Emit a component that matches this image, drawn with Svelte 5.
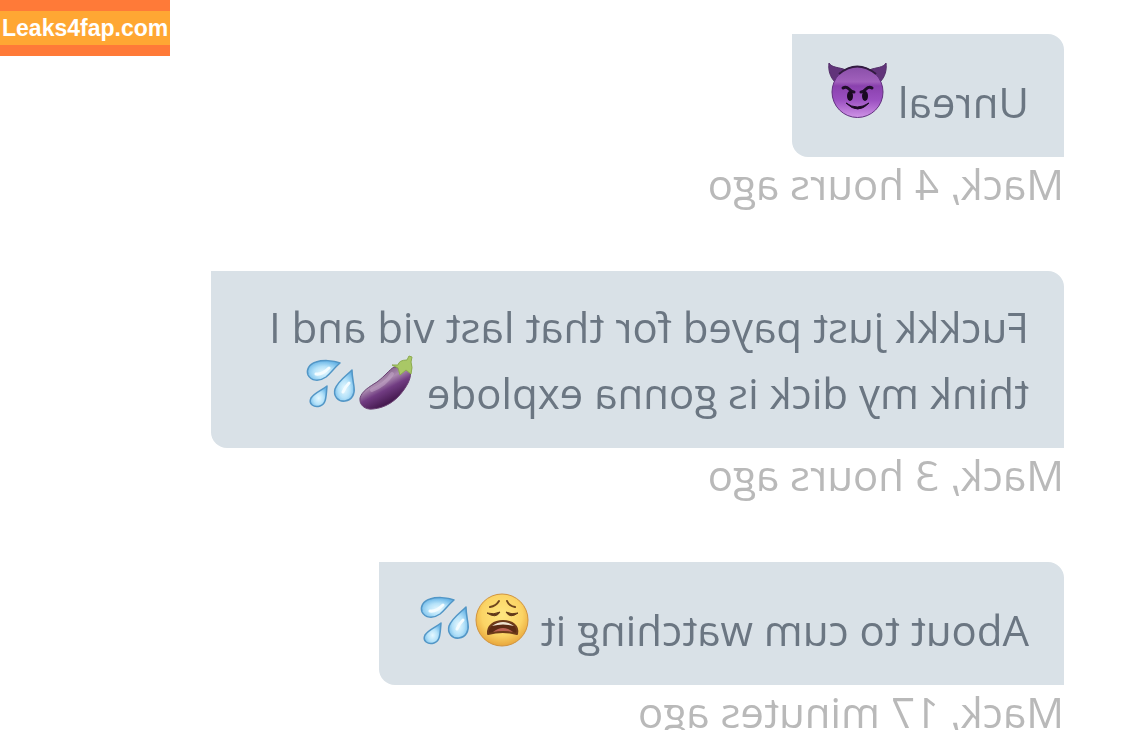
<script lang="ts">
  type Message = {
    text: string;
    emojis: string[];
    author: string;
    time: string;
  };

  const messages: Message[] = [
    { text: 'Unreal', emojis: ['devil'], author: 'Mack', time: '4 hours ago' },
    {
      text: 'Fuckkk just payed for that last vid and I think my dick is gonna explode',
      emojis: ['eggplant', 'drops'],
      author: 'Mack',
      time: '3 hours ago'
    },
    { text: 'About to cum watching it', emojis: ['weary', 'drops'], author: 'Mack', time: '17 minutes ago' }
  ];
</script>

<svg class="defs" width="0" height="0" aria-hidden="true">
  <defs>
    <linearGradient id="devil-skin" x1="0" y1="0" x2="0" y2="1">
      <stop offset="0" stop-color="#8a4fa8" />
      <stop offset="0.3" stop-color="#a060bc" />
      <stop offset="0.38" stop-color="#8a41ae" />
      <stop offset="0.65" stop-color="#9a4fc0" />
      <stop offset="1" stop-color="#cf93e6" />
    </linearGradient>
    <radialGradient id="weary-skin" cx="0.5" cy="0.4" r="0.6">
      <stop offset="0" stop-color="#ffe680" />
      <stop offset="0.65" stop-color="#fbd465" />
      <stop offset="1" stop-color="#e8a63c" />
    </radialGradient>
    <radialGradient id="water" cx="0.5" cy="0.6" r="0.6">
      <stop offset="0" stop-color="#e6f8ff" />
      <stop offset="0.5" stop-color="#b5e2f9" />
      <stop offset="1" stop-color="#67b4e6" />
    </radialGradient>
    <linearGradient id="aubergine" x1="0.3" y1="0.25" x2="0.65" y2="0.8">
      <stop offset="0" stop-color="#8b6a91" />
      <stop offset="0.25" stop-color="#ab8bb0" />
      <stop offset="0.55" stop-color="#713c82" />
      <stop offset="1" stop-color="#45194f" />
    </linearGradient>
  </defs>
</svg>

<main class="chat">
  {#each messages as message}
    <article class="message">
      <p class="bubble">
        {message.text}
        <span class="emojis">
          {#each message.emojis as emoji}
            <svg class="emoji" viewBox="0 0 56 55" role="img" aria-label={emoji}>
              <g transform="matrix(-1 0 0 1 56 0)">
                {#if emoji === 'devil'}
                  <path d="M0-2C3 3 10 2 17 5L6 17C1 12-1 5 0-2Z" fill="#61347a" stroke="#54306a" />
                  <path d="M57-2C54 3 48 2 40 5L51 17C56 12 58 5 57-2Z" fill="#61347a" stroke="#54306a" />
                  <circle cx="28.5" cy="27" r="25.5" fill="url(#devil-skin)" stroke="#623080" />
                  <path d="M10 9Q28-6 47 9" fill="none" stroke="#321b40" stroke-width="2" />
                  <path d="M14 23Q17 21 20 24T25 27M43 23Q40 21 37 24T32 27" fill="none" stroke="#1f0d29" stroke-width="3" stroke-linecap="round" />
                  <ellipse cx="21" cy="31" rx="3" ry="5" fill="#190920" />
                  <ellipse cx="36" cy="31" rx="3" ry="5" fill="#190920" />
                  <path d="M17 38Q28 46 40 38Q29 50 17 38Z" fill="#1c0a25" stroke="#1c0a25" stroke-linejoin="round" />
                {:else if emoji === 'weary'}
                  <circle cx="30" cy="27" r="26" fill="url(#weary-skin)" stroke="#d1943f" />
                  <path d="M18 14Q24 13 27 8M35 8Q37 13 43 14" fill="none" stroke="#70461d" stroke-width="2" stroke-linecap="round" />
                  <path d="M15 20Q22 22 28 19Q24 26 15 20ZM34 19Q40 22 46 20Q38 26 34 19Z" fill="#61391a" stroke="#61391a" stroke-linejoin="round" />
                  <path d="M16 41C15 33 22 28 31 28S47 33 45 41Q31 37 16 41Z" fill="#5c2b14" stroke="#6e3b19" stroke-width="2" stroke-linejoin="round" />
                  <path d="M20 33Q31 25 42 33Q31 30 20 33Z" fill="#efe3cf" />
                  <path d="M21 39Q31 31 41 39Q31 37 21 39Z" fill="#ba6253" />
                {:else if emoji === 'drops'}
                  <g fill="url(#water)" stroke="#5296c6" stroke-width="1.5" stroke-linejoin="round">
                    <path d="M38 7C31 4 20 4 14 6C7 8 4 14 6 19C9 25 17 26 24 21C29 17 32 12 38 7Z" />
                    <path d="M50 14C44 20 36 25 33 33C31 40 36 46 43 45C50 44 53 38 52 31C51 24 50 20 50 14Z" />
                    <path d="M25 30C20 34 12 37 9 42C6 48 12 52 18 50C24 48 24 42 25 30Z" />
                  </g>
                  <path d="M14 18Q20 19 27 12" fill="none" stroke="#f4fcff" stroke-width="3" stroke-linecap="round" />
                  <path d="M41 36Q43 31 47 27" fill="none" stroke="#f4fcff" stroke-width="3" stroke-linecap="round" />
                {:else}
                  <path d="M36 11C31 14 28 19 19 26C11 31 4 35 2 42C1 49 7 54 15 53C27 52 38 45 45 35C50 28 54 21 52 14Z" fill="url(#aubergine)" stroke="#6b4274" />
                  <path d="M34 18Q27 29 14 34" fill="none" stroke="#c5aac9" stroke-width="4" stroke-linecap="round" opacity="0.5" />
                  <path d="M34 9L40 9Q41 4 49 4L51 0L54 1L53 6Q55 11 53 18L48 14L42 19L40 12Z" fill="#a9c866" stroke="#8cab50" stroke-linejoin="round" />
                {/if}
              </g>
            </svg>
          {/each}
        </span>
      </p>
      <footer class="meta">{message.author}, {message.time}</footer>
    </article>
  {/each}
</main>

<div class="watermark"><span>Leaks4fap.com</span></div>

<style>
  :global(body) {
    margin: 0;
    background: #fff;
  }

  .defs {
    position: absolute;
  }

  /* The conversation is shown flipped, as from a front camera. */
  .chat {
    box-sizing: border-box;
    height: 100vh;
    overflow: hidden;
    padding: 34px 61px 0;
    transform: scaleX(-1);
    font-family: 'Open Sans', 'Noto Sans', sans-serif;
    font-size: 42px;
  }

  .message {
    display: flex;
    flex-direction: column;
    align-items: flex-start;
    margin-bottom: 60px;
  }

  .bubble {
    box-sizing: border-box;
    max-width: 85%;
    margin: 0;
    padding: 29px 37px 28px 35px;
    border-radius: 0 16px;
    border-radius: 16px 0;
    background: #d9e1e7;
    color: #6b7682;
    line-height: 54px;
  }

  .emojis {
    display: inline-flex;
    align-items: flex-end;
    vertical-align: -2px;
    height: 57px;
    margin-left: 2px;
  }

  .emoji {
    width: 56px;
    height: 55px;
    overflow: visible;
  }

  .meta {
    color: #b9b9b9;
    line-height: 54px;
  }

  .watermark {
    position: absolute;
    top: 0;
    left: 0;
    padding: 11px 0;
    background: #ff7a38;
    color: #fff;
    font: bold 23px/34px 'Liberation Sans', Arial, sans-serif;
  }

  .watermark span {
    display: block;
    padding: 0 2px;
    background: #ffa733;
  }
</style>
